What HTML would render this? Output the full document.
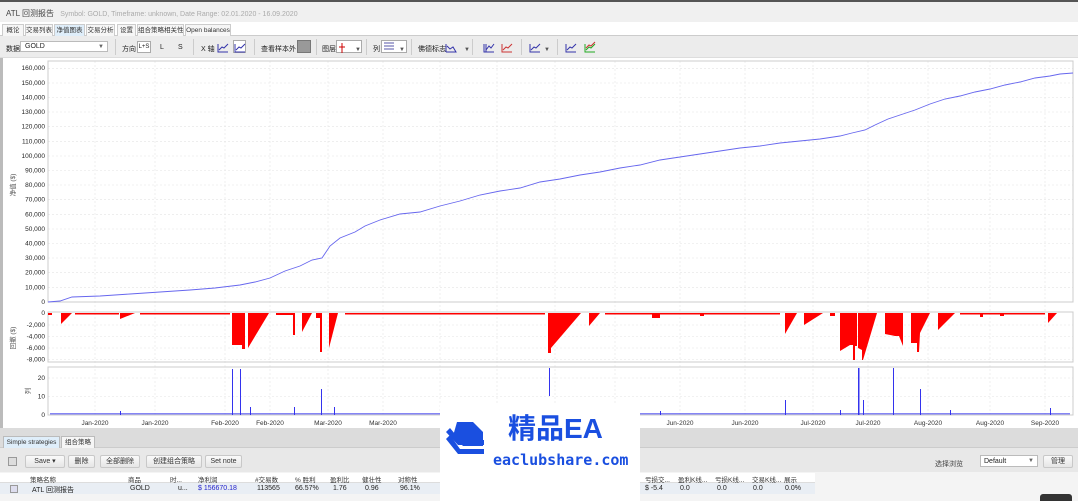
<!DOCTYPE html>
<html><head><meta charset="utf-8"><style>
*{margin:0;padding:0;box-sizing:border-box}
body{width:1078px;height:501px;overflow:hidden;background:#fff;font-family:"Liberation Sans","Noto Sans CJK SC",sans-serif;font-size:7px;color:#222;position:relative}
.a{position:absolute}
.tab{position:absolute;top:24px;height:12px;border:1px solid #ccc;border-bottom:none;background:#f6f6f6;font-size:6.5px;line-height:11px;text-align:center;color:#333;white-space:nowrap;overflow:hidden}
.btn{position:absolute;top:455px;height:13px;border:1px solid #c8c8c8;border-radius:2px;background:linear-gradient(#fafafa,#e6e6e6);font-size:7px;line-height:12px;text-align:center;color:#333}
.ic{position:absolute;top:40px;width:13px;height:13px;border:1px solid #aaa;background:#fff}
.sep{position:absolute;top:39px;width:1px;height:16px;background:#ccc}
</style></head><body>
<div class="a" style="left:0;top:0;width:1078px;height:2px;background:#555"></div>
<div class="a" style="left:0;top:2px;width:1078px;height:20px;background:#f0f0f0"></div>
<div class="a" style="left:6px;top:8px;font-size:8px;color:#444">ATL 回测报告 <span style="color:#aaa;font-size:7px;margin-left:4px">Symbol: GOLD, Timeframe: unknown, Date Range: 02.01.2020 - 16.09.2020</span></div>
<div class="a" style="left:0;top:22px;width:1078px;height:14px;background:#fff;border-bottom:1px solid #ccc"></div>
<div class="tab" style="left:2px;width:22px">概论</div>
<div class="tab" style="left:25px;width:28px">交易列表</div>
<div class="tab" style="left:54px;width:31px;background:#dfeefa">净值图表</div>
<div class="tab" style="left:86px;width:29px">交易分析</div>
<div class="tab" style="left:117px;width:19px">设置</div>
<div class="tab" style="left:137px;width:47px">组合策略相关性</div>
<div class="tab" style="left:185px;width:46px">Open balances</div>
<div class="a" style="left:0;top:36px;width:1078px;height:22px;background:#ececec;border-bottom:1px solid #ddd"></div>
<div class="a" style="left:6px;top:44px">数据</div>
<div class="a" style="left:20px;top:41px;width:88px;height:11px;background:#fff;border:1px solid #bbb;padding-left:4px;line-height:10px">GOLD<span style="position:absolute;right:3px;color:#666;font-size:6px">▼</span></div>
<div class="sep" style="left:115px"></div>
<div class="a" style="left:122px;top:44px">方向</div>
<div class="a" style="left:137px;top:41px;width:14px;height:12px;border:1px solid #aaa;background:#fff;line-height:11px;text-align:center;font-size:6px">L+S</div>
<div class="a" style="left:160px;top:44px">L</div><div class="a" style="left:178px;top:44px">S</div>
<div class="sep" style="left:193px"></div>
<div class="a" style="left:201px;top:44px">X 轴</div>
<div class="ic" style="left:233px"></div>
<div class="sep" style="left:254px"></div>
<div class="a" style="left:261px;top:44px">查看样本外</div>
<div class="a" style="left:297px;top:40px;width:14px;height:13px;background:#999;border:1px solid #777"></div>
<div class="sep" style="left:316px"></div>
<div class="a" style="left:322px;top:44px">图层</div>
<div class="ic" style="left:336px;width:26px"></div>
<div class="sep" style="left:366px"></div>
<div class="a" style="left:373px;top:44px">列</div>
<div class="ic" style="left:381px;width:26px"></div>
<div class="sep" style="left:411px"></div>
<div class="a" style="left:418px;top:44px">佛德标志</div>
<div class="sep" style="left:472px"></div><div class="sep" style="left:521px"></div><div class="sep" style="left:557px"></div>
<svg class="a" style="left:0;top:0" width="1078" height="60">
<g fill="none" stroke-width="1">
<path d="M446 52V44M446 52h10l-3-5-3 2-3-3" stroke="#33a"/>
<path d="M484 44v8h10M486 50l3-4 2 2 3-4M486 44v8" stroke="#33a"/>
<path d="M502 44v8h10M503 50l3-3 2 1 4-4" stroke="#c33"/>
<path d="M530 44v8h10M531 50l3-3 2 1 4-4" stroke="#33a"/>
<path d="M566 44v8h10M567 50l3-3 2 1 4-4" stroke="#33a"/>
<path d="M585 44v8h10M586 50l3-3 2 1 4-4" stroke="#2a2"/><path d="M586 48l3-3 2 1 4-4" stroke="#c33"/>
<path d="M218 44v8h10M219 50l3-3 2 1 4-4" stroke="#33a"/>
<path d="M235 44v8h10M236 50l3-3 2 1 4-4" stroke="#33a"/>
<path d="M342 43v10M339 47h6" stroke="#c00"/>
<path d="M384 43h10M384 46h10M384 49h10" stroke="#55a"/>
</g>
<text x="464" y="51" font-size="6" fill="#555">▼</text><text x="544" y="51" font-size="6" fill="#555">▼</text>
<text x="355" y="51" font-size="6" fill="#555">▼</text><text x="399" y="51" font-size="6" fill="#555">▼</text>
</svg>

<svg class="a" style="left:0;top:58px" width="1078" height="372" viewBox="0 58 1078 372" font-family="Liberation Sans" font-size="6.5" fill="#222">
<rect x="0" y="58" width="1078" height="372" fill="#fff"/>
<rect x="0" y="58" width="3" height="372" fill="#bbb"/>
<g stroke="#e4e4e4" stroke-dasharray="2,2" stroke-width="0.6">
<path d="M48 68.3H1073M48 83H1073M48 97.5H1073M48 112H1073M48 126.7H1073M48 141.3H1073M48 156H1073M48 170.5H1073M48 185H1073M48 199.7H1073M48 214.3H1073M48 229H1073M48 243.5H1073M48 258H1073M48 272.7H1073M48 287.3H1073"/>
<path d="M48 325H1073M48 336.5H1073M48 348H1073M48 359.5H1073M48 378H1073M48 396.5H1073"/>
<path d="M95 61V415M155 61V415M225 61V415M270 61V415M328 61V415M383 61V415M440 61V415M497 61V415M555 61V415M615 61V415M680 61V415M745 61V415M813 61V415M868 61V415M928 61V415M990 61V415M1045 61V415"/>
</g>
<g fill="none" stroke="#ccc"><rect x="48" y="61" width="1025" height="241"/><rect x="48" y="312" width="1025" height="50"/><rect x="48" y="367" width="1025" height="48"/></g>
<g text-anchor="end">
<text x="45" y="70">160,000</text><text x="45" y="85">150,000</text><text x="45" y="99.5">140,000</text><text x="45" y="114">130,000</text><text x="45" y="128.7">120,000</text><text x="45" y="143.3">110,000</text><text x="45" y="158">100,000</text><text x="45" y="172.5">90,000</text><text x="45" y="187">80,000</text><text x="45" y="201.7">70,000</text><text x="45" y="216.3">60,000</text><text x="45" y="231">50,000</text><text x="45" y="245.5">40,000</text><text x="45" y="260">30,000</text><text x="45" y="274.7">20,000</text><text x="45" y="289.3">10,000</text><text x="45" y="304">0</text>
<text x="45" y="315">0</text><text x="45" y="327">-2,000</text><text x="45" y="338.5">-4,000</text><text x="45" y="350">-6,000</text><text x="45" y="361.5">-8,000</text>
<text x="45" y="380">20</text><text x="45" y="398.5">10</text><text x="45" y="417">0</text>
</g>
<text transform="translate(15,185) rotate(-90)" text-anchor="middle" fill="#555">净值 ($)</text>
<text transform="translate(15,338) rotate(-90)" text-anchor="middle" fill="#555">回撤 ($)</text>
<text transform="translate(30,391) rotate(-90)" text-anchor="middle" fill="#555">列</text>
<polyline fill="none" stroke="#6666ee" stroke-width="0.9" points="48,302 60,301 72,297 100,296 130,294 160,292 190,290 215,288 240,285 255,282 270,278 285,271 300,266 312,260 322,258 330,246 340,238 355,232 365,226 380,220 400,214 420,212 440,206 460,201 480,195 500,191 520,188 540,182 560,179 580,175 600,172 620,168 640,165 660,160 680,157 700,154 720,151 740,148 760,146 780,143 800,141 820,139 840,136 852,133 865,130 875,125 888,119 900,115 915,110 930,104 945,99 960,96 975,92 990,89 1005,85 1020,82 1035,78 1050,76 1060,74 1073,73"/>
<g fill="#f00">
<path d="M48 313h4v2h-4z"/>
<path d="M61 313h11l-11 11z"/>
<path d="M120 313h15l-15 6z"/>
<path d="M232 313h13v36h-3v-4h-10z"/>
<path d="M248 313h21l-21 35z"/>
<path d="M276 313h17v2h-17zM293 313h2v22h-2zM302 313h10l-10 19zM316 313h5v5h-5zM320 313h2v39h-2zM329 313h9l-9 35z"/>
<path d="M548 313h3v40h-3zM551 313h30l-30 35z"/>
<path d="M589 313h11l-11 13z"/>
<path d="M652 313h8v5h-8z"/>
<path d="M785 313h12l-12 21z"/>
<path d="M804 313h19l-19 12z"/>
<path d="M840 313h17v33h-2v14h-2v-15h-3l-10 6z"/>
<path d="M858 313h19l-14 47h-1v-10l-4-2z"/>
<path d="M885 313h18v33l-4-10-4 0-10-2z"/>
<path d="M911 313h19l-10 20-1 19h-2v-9h-6z"/>
<path d="M938 313h17l-17 17z"/>
<path d="M1048 313h9l-9 10z"/>
<path d="M75 313h44v1.5h-44zM140 313h90v1.5h-90zM345 313h200v1.5h-200zM605 313h175v1.5h-175zM960 313h85v1.5h-85zM1000 313h4v3h-4zM980 313h3v4h-3zM830 313h5v3h-5zM700 313h4v3h-4z"/>
</g>
<g fill="#3333ee">
<rect x="50" y="413" width="1020" height="1.5" opacity="0.6"/>
<rect x="232" y="369" width="1" height="46"/><rect x="240" y="369" width="1" height="46"/><rect x="250" y="407" width="1" height="8"/><rect x="294" y="407" width="1" height="8"/><rect x="321" y="389" width="1" height="26"/><rect x="120" y="411" width="1" height="4"/><rect x="334" y="407" width="1" height="8"/>
<rect x="549" y="368" width="1" height="28"/><rect x="785" y="400" width="1" height="15"/><rect x="858" y="368" width="1.5" height="47"/><rect x="863" y="400" width="1" height="15"/><rect x="893" y="368" width="1" height="47"/><rect x="920" y="389" width="1" height="26"/><rect x="1050" y="408" width="1" height="7"/><rect x="660" y="411" width="1" height="4"/><rect x="840" y="410" width="1" height="5"/><rect x="950" y="410" width="1" height="5"/>
</g>
<g text-anchor="middle" font-size="6.5" fill="#333">
<text x="95" y="425">Jan-2020</text><text x="155" y="425">Jan-2020</text><text x="225" y="425">Feb-2020</text><text x="270" y="425">Feb-2020</text><text x="328" y="425">Mar-2020</text><text x="383" y="425">Mar-2020</text><text x="680" y="425">Jun-2020</text><text x="745" y="425">Jun-2020</text><text x="813" y="425">Jul-2020</text><text x="868" y="425">Jul-2020</text><text x="928" y="425">Aug-2020</text><text x="990" y="425">Aug-2020</text><text x="1045" y="425">Sep-2020</text>
</g>
</svg>

<div class="a" style="left:0;top:428px;width:1078px;height:73px;background:#dcdcdc"></div>
<div class="a" style="left:0;top:447px;width:1078px;height:25px;background:#e8e8e8;border-top:1px solid #ccc"></div>
<div class="tab" style="left:3px;top:436px;width:57px;background:#dfeefa;border-color:#bbb">Simple strategies</div>
<div class="tab" style="left:61px;top:436px;width:34px;border-color:#bbb">组合策略</div>
<div class="a" style="left:8px;top:457px;width:9px;height:9px;border:1px solid #999;background:#ddd"></div>
<div class="btn" style="left:25px;width:40px">Save ▾</div>
<div class="btn" style="left:68px;width:27px">删除</div>
<div class="btn" style="left:100px;width:40px">全部删除</div>
<div class="btn" style="left:146px;width:56px">创建组合策略</div>
<div class="btn" style="left:205px;width:37px">Set note</div>
<div class="a" style="left:935px;top:459px;color:#444">选择浏览</div>
<div class="a" style="left:980px;top:455px;width:58px;height:12px;background:#fff;border:1px solid #bbb;padding-left:3px;line-height:11px">Default<span style="position:absolute;right:3px;font-size:6px;color:#666">▼</span></div>
<div class="btn" style="left:1043px;width:30px">管理</div>
<div class="a" style="left:0;top:472px;width:1078px;height:29px;background:#f4f4f4"></div>
<div class="a" style="left:0;top:473px;width:815px;height:10px;background:#fff;border-bottom:1px solid #ddd"></div>
<div class="a" style="left:0;top:483px;width:815px;height:11px;background:#e9eef4"></div>
<div class="a" style="left:0;top:474px;font-size:6.5px;color:#333;white-space:nowrap;width:1078px">
<span class="a" style="left:30px">策略名称</span><span class="a" style="left:128px">商品</span><span class="a" style="left:170px">时...</span><span class="a" style="left:198px">净利润</span><span class="a" style="left:255px">#交易数</span><span class="a" style="left:295px">% 胜利</span><span class="a" style="left:330px">盈利比</span><span class="a" style="left:362px">健壮性</span><span class="a" style="left:398px">对称性</span>
<span class="a" style="left:645px">亏损交...</span><span class="a" style="left:678px">盈利K线...</span><span class="a" style="left:715px">亏损K线...</span><span class="a" style="left:752px">交易K线...</span><span class="a" style="left:784px">展示</span>
</div>
<div class="a" style="left:10px;top:485px;width:8px;height:8px;border:1px solid #999;background:#dde"></div>
<div class="a" style="left:0;top:485px;font-size:7px;color:#222;white-space:nowrap;width:1078px">
<span class="a" style="left:32px">ATL 回测报告</span><span class="a" style="left:130px">GOLD</span><span class="a" style="left:178px">u...</span><span class="a" style="left:198px;color:#22c">$ 156670.18</span><span class="a" style="left:257px">113565</span><span class="a" style="left:295px">66.57%</span><span class="a" style="left:333px">1.76</span><span class="a" style="left:365px">0.96</span><span class="a" style="left:400px">96.1%</span>
<span class="a" style="left:645px">$ -5.4</span><span class="a" style="left:680px">0.0</span><span class="a" style="left:717px">0.0</span><span class="a" style="left:753px">0.0</span><span class="a" style="left:785px">0.0%</span>
</div>
<div class="a" style="left:1040px;top:494px;width:32px;height:7px;background:#333;border-radius:3px 3px 0 0"></div>

<div class="a" style="left:440px;top:405px;width:200px;height:96px;background:#fff"></div>
<svg class="a" style="left:443px;top:417px" width="50" height="50" viewBox="0 0 50 50">
<g fill="#1a4fe0">
<path d="M14 5h16l10 10v14H20L10 19z"/>
<path d="M3 15l4-4 10 12h24v5H15z"/>
<path d="M3 22l4-4 10 14h24v5H15z"/>
</g>
</svg>
<div class="a" style="left:508px;top:414px;font-size:28px;font-weight:bold;color:#1a4fe0;font-family:'Liberation Sans','Noto Sans CJK SC',sans-serif;line-height:30px">精品EA</div>
<div class="a" style="left:493px;top:452px;font-size:15px;font-weight:bold;color:#1a4fe0;font-family:'DejaVu Sans Mono','Liberation Mono',monospace;line-height:16px">eaclubshare.com</div>
</body></html>
